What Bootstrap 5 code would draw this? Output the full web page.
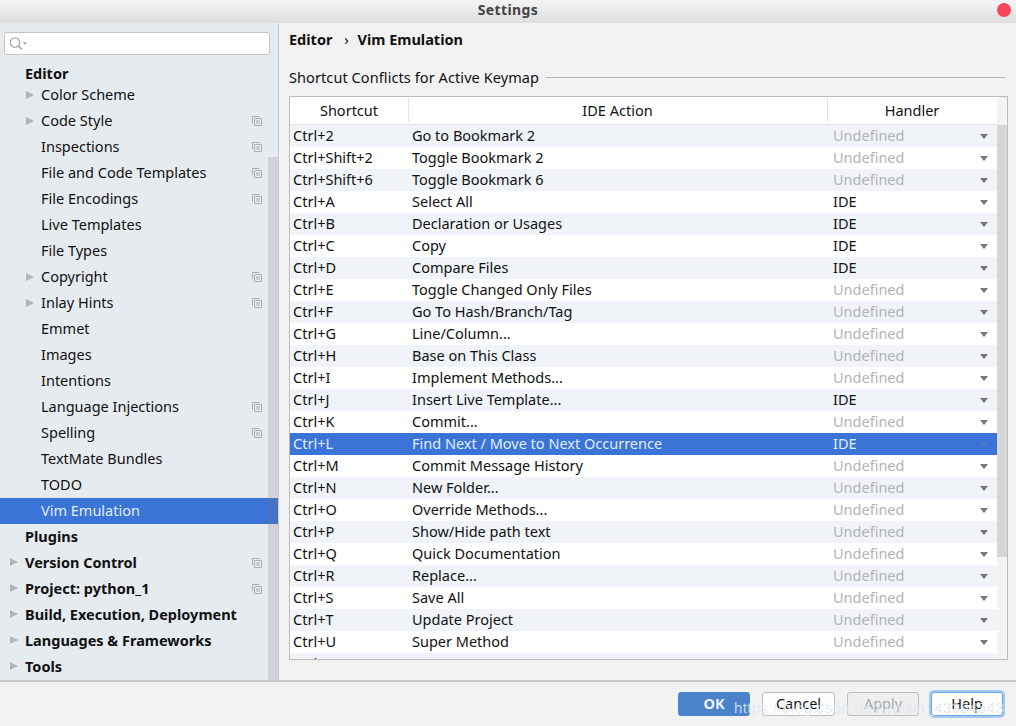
<!DOCTYPE html>
<html lang="en">
<head>
<meta charset="UTF-8">
<meta name="viewport" content="width=device-width, initial-scale=1.0">
<title>Settings</title>
<link href="https://cdn.jsdelivr.net/npm/bootstrap@5.3.0/dist/css/bootstrap.min.css" rel="stylesheet">
<style>
html, body { height: 100%; }
body {
  font-family: "Noto Sans", sans-serif;
  font-size: 14.5px;
  color: #111;
  background: #f2f2f2;
  overflow: hidden;
  position: relative;
}
.app-window { height: 726px; width: 1016px; }
.title-bar {
  height: 23px;
  background: linear-gradient(#f4f4f4, #dedede);
  font-weight: 700;
  font-size: 14px;
  letter-spacing: .4px;
  color: #444;
  line-height: 19px;
  position: relative;
}
.close-dot {
  position: absolute; right: 5px; top: 3px;
  width: 14px; height: 14px; border-radius: 50%;
  background: #f6475a;
}
.main-area { height: 657px; }
.side-panel {
  width: 279px;
  background: #e6ebf0;
  border-right: 1px solid #c9c9c9;
  position: relative;
  overflow: hidden;
}
.side-scroll {
  position: absolute; right: 0; top: 134px; bottom: 0;
  width: 10px; background: rgba(120,120,120,.2);
}
.search-box {
  margin: 9px 8px 0 4px;
  height: 23px;
  background: #fff;
  border: 1px solid #c4c4c4;
  border-radius: 3px;
  padding-left: 5px;
}
.side-list { margin-top: 6px; }
.side-row {
  height: 26px;
  padding-left: 41px;
  position: relative;
  line-height: 25px;
}
.side-row.first-row { height: 21px; line-height: 24px; }
.side-row.group { padding-left: 25px; font-weight: 700; }
.side-row.on { background: #3a74d6; color: #e3ecfa; }
.arrow-mark {
  position: absolute; top: 9px; left: 26px;
  width: 0; height: 0;
  border-left: 8px solid #b4b4b4;
  border-top: 4px solid transparent;
  border-bottom: 4px solid transparent;
}
.group .arrow-mark { left: 10px; top: 8px; }
.copy-mark { position: absolute; left: 252px; top: 8px; }
.content-panel { flex: 1; min-width: 0; padding: 0 8px 0 10px; }
.crumbs { height: 33px; line-height: 33px; font-weight: 700; }
.crumb-sep { font-weight: 400; margin: 0 5px 0 8px; }
.section-head { margin: 10px 0 8px; height: 22px; line-height: 22px; letter-spacing: .085px; }
.section-head hr { margin: 0 3px 0 7px; flex: 1; border-color: #b5b5b5; opacity: 1; }
.table-frame {
  height: 564px;
  border: 1px solid #bcbcbc;
  background: #fff;
  overflow: hidden;
  position: relative;
}
.table-scroll {
  position: absolute; right: 0; top: 0; bottom: 0; width: 10px; background: #f3f3f3; padding-top: 28px;
}
.table-thumb { height: 432px; background: #d6d6d6; }
.keys-table { width: 707px; table-layout: fixed; margin: 0; border-collapse: separate; border-spacing: 0; }
.keys-table th {
  height: 28px; padding: 0; font-weight: 400; text-align: center;
  border-bottom: 1px solid #e4e4e4; background: #fff; vertical-align: middle;
  position: relative;
}
.keys-table th + th::before {
  content: ""; position: absolute; left: 0; top: 1px; bottom: 2px; width: 1px; background: #e4e4e4;
}
.keys-table td { height: 22px; padding: 0 3px; line-height: 21px; vertical-align: top; white-space: nowrap; border: 0; }
.keys-table td:nth-child(2) { padding-left: 4px; }
.keys-table tbody tr:nth-child(odd) td { background: #f0f4f9; }
.keys-table tbody tr.picked td { background: #3a74d6; color: #e3ecfa; }
.keys-table td.muted-cell { color: #b3b3b3; }
.keys-table td.hand-cell { position: relative; padding-left: 6px; }
.keys-table tr.picked td.hand-cell { color: #e3ecfa; }
.drop-mark {
  position: absolute; right: 9px; top: 9px; width: 0; height: 0;
  border-top: 5px solid #757575;
  border-left: 4px solid transparent;
  border-right: 4px solid transparent;
}
.picked .drop-mark { border-top-color: #4f79c4; }
.foot-bar {
  height: 46px;
  border-top: 2px solid #c9c9c9;
  padding: 10px 13px 0 0;
  gap: 12px;
  position: relative;
}
.dlg-btn {
  height: 24px; padding: 0 0 2px; font-size: 14.5px; line-height: 20px;
  border: 1px solid #bdbdbd; border-radius: 3px; background: #fff; color: #111;
}
.dlg-ok { width: 72px; background: #4a83c9; border-color: #4a83c9; color: #eef3fa; font-weight: 700; }
.dlg-cancel { width: 73px; }
.dlg-apply { width: 72px; background: #efefef; color: #a9a9a9; }
.dlg-help { width: 72px; border-color: #6aa4e8; box-shadow: 0 0 0 2px #a5c9f3; }
.stamp {
  position: absolute; left: 734px; top: 697px;
  color: rgba(222,230,240,.85); font-size: 15px; letter-spacing: .4px; white-space: nowrap;
  font-family: "Liberation Sans", sans-serif;
}
</style>
</head>
<body>
<div class="app-window d-flex flex-column">
  <div class="title-bar text-center">Settings<span class="close-dot"></span></div>

  <div class="main-area d-flex">
    <div class="side-panel">
      <div class="search-box d-flex align-items-center">
        <svg width="22" height="16" viewBox="0 0 22 16"><circle cx="5" cy="6.500" r="4.700" fill="none" stroke="#9a9a9a" stroke-width="1.100"/><path d="M8.500 10l3.500 3.500" stroke="#9a9a9a" stroke-width="1.200"/><path d="M13 6.500h4l-2 2z" fill="#8a8a8a"/></svg>
      </div>
      <div class="side-list" id="sideList"></div>
      <div class="side-scroll"></div>
    </div>

    <div class="content-panel">
      <div class="crumbs">Editor <span class="crumb-sep">›</span> Vim Emulation</div>
      <div class="section-head d-flex align-items-center">Shortcut Conflicts for Active Keymap<hr></div>
      <div class="table-frame">
        <table class="keys-table">
          <colgroup><col style="width:118px"><col style="width:419px"><col style="width:170px"></colgroup>
          <thead><tr><th>Shortcut</th><th>IDE Action</th><th>Handler</th></tr></thead>
          <tbody id="keyRows"></tbody>
        </table>
        <div class="table-scroll"><div class="table-thumb"></div></div>
      </div>
    </div>
  </div>

  <div class="foot-bar d-flex justify-content-end">
    <button class="dlg-btn dlg-ok">OK</button>
    <button class="dlg-btn dlg-cancel">Cancel</button>
    <button class="dlg-btn dlg-apply">Apply</button>
    <button class="dlg-btn dlg-help">Help</button>
  </div>
</div>
<div class="stamp">https://blog.csdn.net/weixin_43364543</div>

<script>
// [label, hasArrow, hasCopyIcon, isGroup, selected]
const sideItems = [
  ['Editor', 0, 0, 1],
  ['Color Scheme', 1, 0],
  ['Code Style', 1, 1],
  ['Inspections', 0, 1],
  ['File and Code Templates', 0, 1],
  ['File Encodings', 0, 1],
  ['Live Templates', 0, 0],
  ['File Types', 0, 0],
  ['Copyright', 1, 1],
  ['Inlay Hints', 1, 1],
  ['Emmet', 0, 0],
  ['Images', 0, 0],
  ['Intentions', 0, 0],
  ['Language Injections', 0, 1],
  ['Spelling', 0, 1],
  ['TextMate Bundles', 0, 0],
  ['TODO', 0, 0],
  ['Vim Emulation', 0, 0, 0, 1],
  ['Plugins', 0, 0, 1],
  ['Version Control', 1, 1, 1],
  ['Project: python_1', 1, 1, 1],
  ['Build, Execution, Deployment', 1, 0, 1],
  ['Languages & Frameworks', 1, 0, 1],
  ['Tools', 1, 0, 1]
];
const copyIcon = '<svg class="copy-mark" width="10" height="10" viewBox="0 0 10 10"><path d="M.5 7.500V.5h7M2.500 9.500V2.500h7v7z" fill="none" stroke="#a8b0b8"/><path d="M4 5h4M4 7h4" stroke="#a8b0b8"/></svg>';
document.getElementById('sideList').innerHTML = sideItems.map((it, i) => {
  const cls = ['side-row'];
  if (i === 0) cls.push('first-row');
  if (it[3]) cls.push('group');
  if (it[4]) cls.push('on');
  const label = it[0].replace('&', '&amp;');
  return `<div class="${cls.join(' ')}">${it[1] ? '<span class="arrow-mark"></span>' : ''}${label}${it[2] ? copyIcon : ''}</div>`;
}).join('');

const keyItems = [
  ['Ctrl+2', 'Go to Bookmark 2', 'Undefined'],
  ['Ctrl+Shift+2', 'Toggle Bookmark 2', 'Undefined'],
  ['Ctrl+Shift+6', 'Toggle Bookmark 6', 'Undefined'],
  ['Ctrl+A', 'Select All', 'IDE'],
  ['Ctrl+B', 'Declaration or Usages', 'IDE'],
  ['Ctrl+C', 'Copy', 'IDE'],
  ['Ctrl+D', 'Compare Files', 'IDE'],
  ['Ctrl+E', 'Toggle Changed Only Files', 'Undefined'],
  ['Ctrl+F', 'Go To Hash/Branch/Tag', 'Undefined'],
  ['Ctrl+G', 'Line/Column...', 'Undefined'],
  ['Ctrl+H', 'Base on This Class', 'Undefined'],
  ['Ctrl+I', 'Implement Methods...', 'Undefined'],
  ['Ctrl+J', 'Insert Live Template...', 'IDE'],
  ['Ctrl+K', 'Commit...', 'Undefined'],
  ['Ctrl+L', 'Find Next / Move to Next Occurrence', 'IDE'],
  ['Ctrl+M', 'Commit Message History', 'Undefined'],
  ['Ctrl+N', 'New Folder...', 'Undefined'],
  ['Ctrl+O', 'Override Methods...', 'Undefined'],
  ['Ctrl+P', 'Show/Hide path text', 'Undefined'],
  ['Ctrl+Q', 'Quick Documentation', 'Undefined'],
  ['Ctrl+R', 'Replace...', 'Undefined'],
  ['Ctrl+S', 'Save All', 'Undefined'],
  ['Ctrl+T', 'Update Project', 'Undefined'],
  ['Ctrl+U', 'Super Method', 'Undefined'],
  ['Ctrl+V', 'Paste', 'IDE']
];
document.getElementById('keyRows').innerHTML = keyItems.map(k =>
  `<tr class="${k[0] === 'Ctrl+L' ? 'picked' : ''}"><td>${k[0]}</td><td>${k[1]}</td><td class="hand-cell ${k[2] === 'Undefined' ? 'muted-cell' : ''}">${k[2]}<span class="drop-mark"></span></td></tr>`
).join('');
</script>
</body>
</html>
